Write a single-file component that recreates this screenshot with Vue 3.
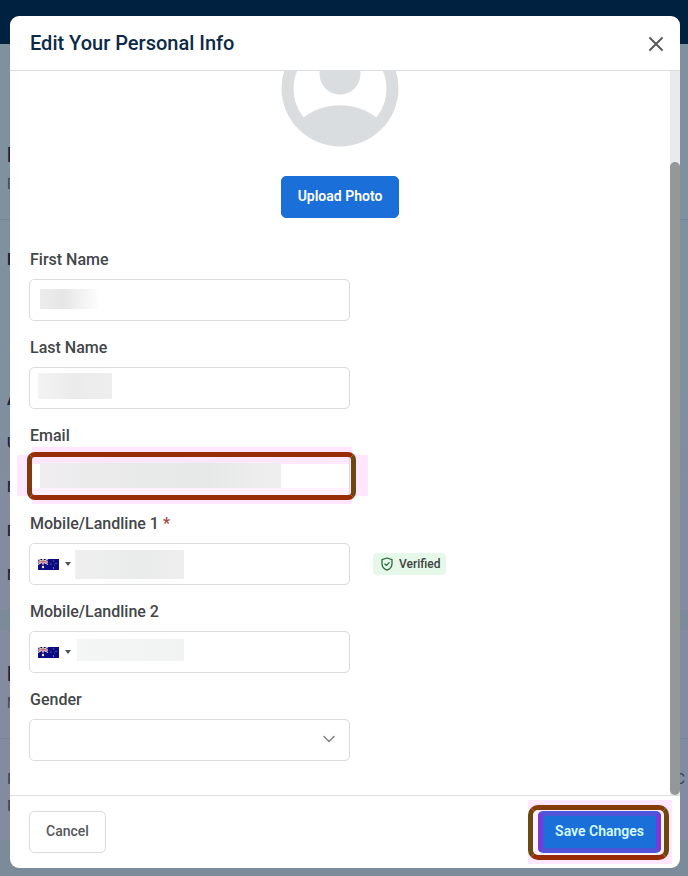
<script setup>
import { ref } from 'vue'

const firstName = ref('')
const lastName = ref('')
const email = ref('')
const gender = ref('')
const phones = ref([
  { id: 'phone1', label: 'Mobile/Landline 1', required: true, verified: true, value: '' },
  { id: 'phone2', label: 'Mobile/Landline 2', required: false, verified: false, value: '' },
])
const accountRows = ['U', 'N', 'E', 'M']
</script>

<template>
  <div class="page">
    <div class="backdrop-page" aria-hidden="true">
      <div class="topbar"></div>
      <section class="panel profile">
        <div class="heading">P</div>
        <div class="sub">B</div>
        <div class="rule"></div>
        <div class="item first">P</div>
        <div class="item account">A</div>
        <div v-for="row in accountRows" :key="row" class="row">{{ row }}</div>
      </section>
      <section class="panel prefs">
        <div class="heading">P</div>
        <div class="sub">N</div>
        <div class="rule"></div>
        <div class="line"><span>P</span><span>C</span></div>
        <div class="line last">P</div>
      </section>
    </div>

    <div class="overlay">
      <form class="modal" role="dialog" aria-labelledby="modal-title" @submit.prevent>
        <header class="modal-head">
          <h1 id="modal-title">Edit Your Personal Info</h1>
          <button type="button" class="close" aria-label="Close">
            <svg width="16" height="16" viewBox="0 0 16 16">
              <path d="M2 2l12 12M14 2L2 14" fill="none" stroke="#55585a" stroke-width="1.9" stroke-linecap="round" />
            </svg>
          </button>
        </header>

        <div class="modal-body">
          <div class="content">
            <div class="photo">
              <svg width="118" height="118" viewBox="0 0 118 118">
                <circle cx="59" cy="59" r="58.5" fill="#dadde0" />
                <path d="M22.500 88.500A46.500 46.500 0 1 1 95.500 88.500C75 72 43 72 22.500 88.500Z" fill="#fff" />
                <circle cx="59" cy="45" r="20.500" fill="#dadde0" />
              </svg>
              <button type="button" class="btn primary">Upload Photo</button>
            </div>

            <div class="field">
              <label for="first">First Name</label>
              <input id="first" v-model="firstName" class="box mask-first" type="text" />
            </div>
            <div class="field">
              <label for="last">Last Name</label>
              <input id="last" v-model="lastName" class="box mask-last" type="text" />
            </div>
            <div class="field">
              <label for="email">Email</label>
              <div class="marked">
                <input id="email" v-model="email" class="box mask-email" type="email" />
                <span class="ring"></span>
              </div>
            </div>
            <div v-for="phone in phones" :key="phone.id" class="field">
              <label :for="phone.id">{{ phone.label }} <span v-if="phone.required" class="star">*</span></label>
              <div class="phone-line">
                <div class="box phone">
                  <button type="button" class="country" aria-label="Country">
                    <svg width="21" height="11" viewBox="0 0 21 11">
                      <rect width="21" height="11" fill="#0b0b82" />
                      <path d="M0 0L10 5.500M10 0L0 5.500" stroke="#d8c9c9" stroke-width="1.300" />
                      <path d="M5 0V5.500M0 2.750H10" stroke="#eadede" stroke-width="2" />
                      <path d="M5 0V5.500M0 2.750H10" stroke="#b05060" stroke-width="0.900" />
                      <circle cx="5" cy="8" r="1.200" fill="#f3e9ff" />
                      <g fill="#8c92d8">
                        <circle cx="15.500" cy="2" r="0.600" /><circle cx="13" cy="5" r="0.600" />
                        <circle cx="18" cy="4.300" r="0.600" /><circle cx="15.500" cy="9" r="0.700" />
                        <circle cx="16.700" cy="6" r="0.400" />
                      </g>
                    </svg>
                    <svg width="6" height="4" viewBox="0 0 6 4"><path d="M0 0H6L3 4Z" fill="#505356" /></svg>
                  </button>
                  <input :id="phone.id" v-model="phone.value" type="tel" :class="['mask-' + phone.id]" />
                </div>
                <span v-if="phone.verified" class="badge">
                  <svg width="14" height="14" viewBox="0 0 14 14" fill="none" stroke="#2f6b3c" stroke-width="1.300" stroke-linejoin="round" stroke-linecap="round">
                    <path d="M7 1L12 2.700V6.500C12 9.700 10 12 7 13.200C4 12 2 9.700 2 6.500V2.700Z" />
                    <path d="M4.900 7L6.400 8.400L9.200 5.600" />
                  </svg>
                  Verified
                </span>
              </div>
            </div>
            <div class="field">
              <label for="gender">Gender</label>
              <div class="select-wrap">
                <select id="gender" v-model="gender" class="box"></select>
                <svg class="chevron" width="14" height="8" viewBox="0 0 14 8">
                  <path d="M2 1.500L7 6.500L12 1.500" fill="none" stroke="#85888a" stroke-width="1.600" stroke-linecap="round" stroke-linejoin="round" />
                </svg>
              </div>
            </div>
          </div>
          <div class="track"><div class="thumb"></div></div>
        </div>

        <footer class="modal-foot">
          <button type="button" class="btn">Cancel</button>
          <div class="save-wrap">
            <span class="ring"></span>
            <button type="submit" class="btn primary save">Save Changes</button>
          </div>
        </footer>
      </form>
    </div>
  </div>
</template>

<style>
body {
  margin: 0;
}
</style>

<style scoped>
* {
  box-sizing: border-box;
}

.page {
  position: relative;
  height: 100vh;
  overflow: hidden;
  font-family: Roboto, "Liberation Sans", sans-serif;
  background: #7c8b99;
}

/* Dimmed account page */
.topbar {
  height: 44px;
  background: #002240;
}

.panel {
  padding: 0 0 0 7px;
  color: #15233f;
}

.profile {
  height: 566px;
  padding-top: 99px;
  background: linear-gradient(#7f909f 60%, #838ba0 85%);
}

.prefs {
  height: 210px;
  margin-top: 20px;
  padding-top: 32px;
  background: #838ba0;
}

.heading {
  font-size: 20px;
  font-weight: 700;
  line-height: 24px;
}

.sub {
  margin-top: 7px;
  font-size: 14px;
  line-height: 20px;
  color: #384656;
}

.rule {
  height: 1px;
  margin: 25px 0 0 -7px;
  background: #75869a;
}

.item,
.row {
  font-size: 16px;
  font-weight: 700;
  line-height: 20px;
}

.first {
  margin-top: 30px;
}

.account {
  margin: 120px 0 11px;
}

.row {
  font-size: 14px;
  font-weight: 500;
  line-height: 44px;
}

.line {
  display: flex;
  justify-content: space-between;
  margin-top: 30px;
  padding-right: 3px;
  font-size: 15px;
  line-height: 20px;
  color: #35405a;
}

.last {
  margin-top: 7px;
}

/* Dialog */
.overlay {
  position: absolute;
  inset: 0;
  display: flex;
  padding: 16px 8px 8px 10px;
}

.modal {
  display: flex;
  flex: 1;
  flex-direction: column;
  min-width: 0;
  border-radius: 9px;
  background: #fff;
}

.modal-head {
  display: flex;
  align-items: center;
  justify-content: space-between;
  height: 55px;
  padding: 0 12px 0 20px;
  border-bottom: 1px solid #dcdfe1;
}

h1 {
  margin: 0;
  font-size: 20px;
  font-weight: 500;
  line-height: 24px;
  color: #0c2a47;
}

button {
  font-family: inherit;
  cursor: pointer;
}

.close {
  display: flex;
  padding: 6px 4px 4px;
  border: 0;
  background: none;
}

.modal-body {
  display: flex;
  flex: 1;
  min-height: 0;
  overflow: hidden;
}

.content {
  display: flex;
  flex: 1;
  flex-direction: column;
  justify-content: flex-end;
  gap: 18px;
  padding: 0 19px 34px;
}

.track {
  display: flex;
  flex-direction: column;
  justify-content: flex-end;
  width: 10px;
  background: #e8eaed;
}

.thumb {
  height: 87.5%;
  border-radius: 5px;
  background: #949899;
}

.photo {
  display: flex;
  flex-direction: column;
  align-items: center;
  gap: 29px;
  margin-bottom: 15px;
}

.photo svg {
  flex: none;
}

.btn {
  height: 42px;
  padding: 0 16px 2px;
  border: 1px solid #d9dcde;
  border-radius: 5px;
  background: #fff;
  color: #55585a;
  font-size: 14px;
  font-weight: 500;
  line-height: 20px;
}

.primary {
  border-color: #1a6fd8;
  background: #1a6fd8;
  color: #fff;
  font-weight: 600;
}

.field {
  display: flex;
  flex-direction: column;
  gap: 10px;
}

label {
  padding-left: 1px;
  font-size: 16px;
  font-weight: 500;
  line-height: 18px;
  color: #434648;
}

.star {
  color: #a2453c;
}

.box {
  width: 100%;
  max-width: 321px;
  height: 42px;
  padding: 0 10px;
  border: 1px solid #d9dcde;
  border-radius: 5px;
  background-color: #fff;
  background-repeat: no-repeat;
  font: 16px Roboto, "Liberation Sans", sans-serif;
  outline: 0;
}

.mask-first {
  background-image: linear-gradient(90deg, #ececed, #e6e6e7 40%, #fff);
  background-position: 10px 9px;
  background-size: 60px 20px;
}

.mask-last {
  background-image: linear-gradient(90deg, #f3f3f4, #ebebec 50%, #eeeeef);
  background-position: 8px 5px;
  background-size: 74px 26px;
}

.mask-email {
  background-image:
    linear-gradient(90deg, #efedef, #e8e9e9 45%, #e7e8e8 70%, #f0efef),
    linear-gradient(#ffe8ff 0 8px, transparent 8px 32px, #fff0ff 32px);
  background-position: 10px 7px, 0 0;
  background-size: 241px 25px, 100% 100%;
}

.marked,
.select-wrap {
  position: relative;
  display: flex;
  max-width: 321px;
}

.marked,
.save-wrap {
  isolation: isolate;
}

/* Highlight frames over the email box and the save button */
.ring {
  position: absolute;
  border: 5px solid;
  border-radius: 8px;
  pointer-events: none;
}

.ring::before,
.ring::after {
  position: absolute;
  z-index: -1;
  background: #ffe8ff;
}

.marked .ring {
  inset: -3px -6px -3px -2px;
  border-color: #982c08 #6d470e #982c08 #81390a;
}

.marked .ring::before {
  content: "";
  inset: -2px -17px -1px -15px;
}

.marked .ring::after {
  content: "";
  inset: -10px -1px -9px 0;
}

.phone-line {
  display: flex;
  align-items: center;
  gap: 23px;
}

.phone {
  display: flex;
  padding: 0 10px 0 8px;
}

.phone input {
  flex: 1;
  min-width: 0;
  padding: 0;
  border: 0;
  outline: 0;
  background-color: transparent;
  background-repeat: no-repeat;
}

.country {
  display: flex;
  align-items: center;
  gap: 6px;
  padding: 0 4px 0 0;
  border: 0;
  background: none;
}

.mask-phone1 {
  background-image: linear-gradient(90deg, #efefef, #eaebeb 60%, #eeeeee);
  background-position: 0 6px;
  background-size: 109px 29px;
}

.mask-phone2 {
  background-image: linear-gradient(90deg, #f4f5f5, #f1f2f2);
  background-position: 2px 7px;
  background-size: 107px 22px;
}

.badge {
  display: flex;
  flex: none;
  align-items: center;
  gap: 5px;
  height: 22px;
  padding: 0 6px 0 7px;
  border-radius: 4px;
  background: #e6f8ea;
  color: #3b4540;
  font-size: 12px;
  font-weight: 500;
}

select {
  appearance: none;
}

.chevron {
  position: absolute;
  top: 16px;
  right: 14px;
  pointer-events: none;
}

.modal-foot {
  display: flex;
  align-items: center;
  justify-content: space-between;
  height: 73px;
  padding: 0 19px;
  border-top: 1px solid #dcdfe1;
}

.save-wrap {
  position: relative;
  display: flex;
}

.save {
  position: relative;
  padding: 0 12px 2px;
  border: 5px solid;
  border-color: #4f55d8 #7938d8;
  color: #d4fbff;
}

.save-wrap .ring {
  inset: -6px -8px -7px -10px;
  border-color: #843a09 #6b480e #962c08;
  border-radius: 10px;
  background: #fff0ff;
}

.save-wrap .ring::before {
  content: "";
  inset: -10px -8px -9px -5px;
}
</style>
